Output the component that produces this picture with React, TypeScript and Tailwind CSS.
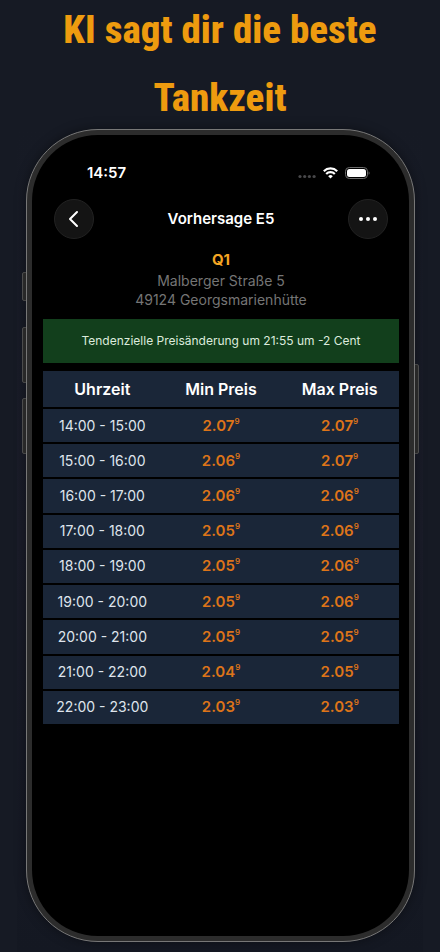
interface Forecast {
  time: string;
  min: string;
  max: string;
}

const forecasts: Forecast[] = [
  { time: '14:00 - 15:00', min: '2.07', max: '2.07' },
  { time: '15:00 - 16:00', min: '2.06', max: '2.07' },
  { time: '16:00 - 17:00', min: '2.06', max: '2.06' },
  { time: '17:00 - 18:00', min: '2.05', max: '2.06' },
  { time: '18:00 - 19:00', min: '2.05', max: '2.06' },
  { time: '19:00 - 20:00', min: '2.05', max: '2.06' },
  { time: '20:00 - 21:00', min: '2.05', max: '2.05' },
  { time: '21:00 - 22:00', min: '2.04', max: '2.05' },
  { time: '22:00 - 23:00', min: '2.03', max: '2.03' },
];

function Price({ value }: { value: string }) {
  return (
    <span className="flex items-start justify-center font-semibold text-[#dd7419]">
      <span className="text-[15px] leading-5">{value}</span>
      <span className="text-[8px] leading-[10px]">9</span>
    </span>
  );
}

function StatusBar() {
  return (
    <div className="flex h-6 items-center justify-between pl-[44px] pr-[29px] text-white">
      <span className="text-[15px] font-semibold">14:57</span>
      <div className="flex items-center gap-[7px]">
        <svg width="18" height="12" viewBox="0 0 18 12" fill="#48484a">
          <circle cx="2" cy="9.5" r="1.6" />
          <circle cx="6.7" cy="9.5" r="1.6" />
          <circle cx="11.4" cy="9.5" r="1.6" />
          <circle cx="16.1" cy="9.5" r="1.6" />
        </svg>
        <svg width="15" height="12" viewBox="0 0 15 12" fill="none" stroke="white" strokeWidth="2.2">
          <path d="M0.8 4.2a9.5 9.5 0 0 1 13.4 0" />
          <path d="M3.2 7a6 6 0 0 1 8.6 0" />
          <path d="M7.5 11.6 5.2 9.2a3.3 3.3 0 0 1 4.6 0z" fill="white" stroke="none" />
        </svg>
        <svg width="25" height="12" viewBox="0 0 25 12">
          <rect x="0.5" y="0.5" width="22" height="11" rx="3.8" fill="none" stroke="#6b6b6b" />
          <rect x="2" y="2" width="19" height="8" rx="2.5" fill="white" />
          <path d="M23.6 4.2c1.3.5 1.3 3.1 0 3.6z" fill="#6b6b6b" />
        </svg>
      </div>
    </div>
  );
}

export default function App() {
  return (
    <div className="flex min-h-screen flex-col bg-[#161a24] font-['Inter','Liberation_Sans',sans-serif]">
      <h1 className="mx-auto max-w-[360px] pb-[26px] -mt-1 text-center font-['Liberation_Sans_Narrow','Roboto_Condensed',sans-serif] text-[39px] font-extrabold leading-[68px] text-[#ee9b0f]">
        KI sagt dir die beste Tankzeit
      </h1>

      <div className="relative -mt-[29px] mx-[17px] flex flex-1 flex-col bg-linear-to-b from-[#161a24] via-[#1a1c29] to-[#141822] pb-[10px] pl-[9px] pr-2">
        {/* Side buttons */}
        <div className="absolute left-[5px] top-[143px] h-[29px] w-[5px] rounded-l-xs border border-[#555555] bg-[#303030]" />
        <div className="absolute left-[5px] top-[198px] h-14 w-[5px] rounded-l-xs border border-[#555555] bg-[#303030]" />
        <div className="absolute left-[5px] top-[269px] h-14 w-[5px] rounded-l-xs border border-[#555555] bg-[#303030]" />
        <div className="absolute right-1 top-[235px] h-[90px] w-[5px] rounded-r-xs border border-[#555555] bg-[#303030]" />

        <div className="relative flex flex-1 flex-col rounded-[72px] border border-[#777777] bg-[#2c2c2c] p-[5px] shadow-[0_0_12px_rgba(0,0,0,0.4)]">
          <main className="flex flex-1 flex-col rounded-[66px] bg-black pl-[11px] pr-[10px] pt-[26px]">
            <StatusBar />

            <header className="mt-[14px] flex items-center justify-between px-[11px]">
              <button
                aria-label="Zurück"
                className="flex size-10 items-center justify-center rounded-full border border-[#222222] bg-[#141414]"
              >
                <svg width="12" height="18" viewBox="0 0 12 18" fill="none" stroke="white" strokeWidth="2" strokeLinecap="round" strokeLinejoin="round">
                  <path d="M9 2 2 9l7 7" />
                </svg>
              </button>
              <h2 className="text-[15px] font-semibold text-white">Vorhersage E5</h2>
              <button
                aria-label="Mehr"
                className="flex size-10 items-center justify-center rounded-full border border-[#222222] bg-[#141414]"
              >
                <svg width="20" height="6" viewBox="0 0 20 6" fill="white">
                  <circle cx="3" cy="3" r="2" />
                  <circle cx="10" cy="3" r="2" />
                  <circle cx="17" cy="3" r="2" />
                </svg>
              </button>
            </header>

            <section className="mt-[11px] text-center text-[14px] leading-[19px] text-[#757575]">
              <h3 className="text-[15px] font-bold text-[#f5a623]">Q1</h3>
              <p className="mt-[2px]">Malberger Straße 5</p>
              <p>49124 Georgsmarienhütte</p>
            </section>

            <p className="mt-[10px] flex h-11 items-center justify-center bg-[#123f1c] text-[12px] text-[#dcebdc]">
              Tendenzielle Preisänderung um 21:55 um -2 Cent
            </p>

            <table className="mt-[6px] h-[357px] w-full table-fixed border-separate border-spacing-x-0 border-spacing-y-[2px] text-center">
              <thead>
                <tr className="h-9 bg-[#1a2638] text-[16px] text-white">
                  <th className="font-semibold">Uhrzeit</th>
                  <th className="font-semibold">Min Preis</th>
                  <th className="font-semibold">Max Preis</th>
                </tr>
              </thead>
              <tbody>
                {forecasts.map((row) => (
                  <tr key={row.time} className="bg-[#1a2638]">
                    <td className="text-[14px] leading-5 text-[#dfe4ec]">{row.time}</td>
                    <td>
                      <Price value={row.min} />
                    </td>
                    <td>
                      <Price value={row.max} />
                    </td>
                  </tr>
                ))}
              </tbody>
            </table>
          </main>
        </div>
      </div>
    </div>
  );
}
